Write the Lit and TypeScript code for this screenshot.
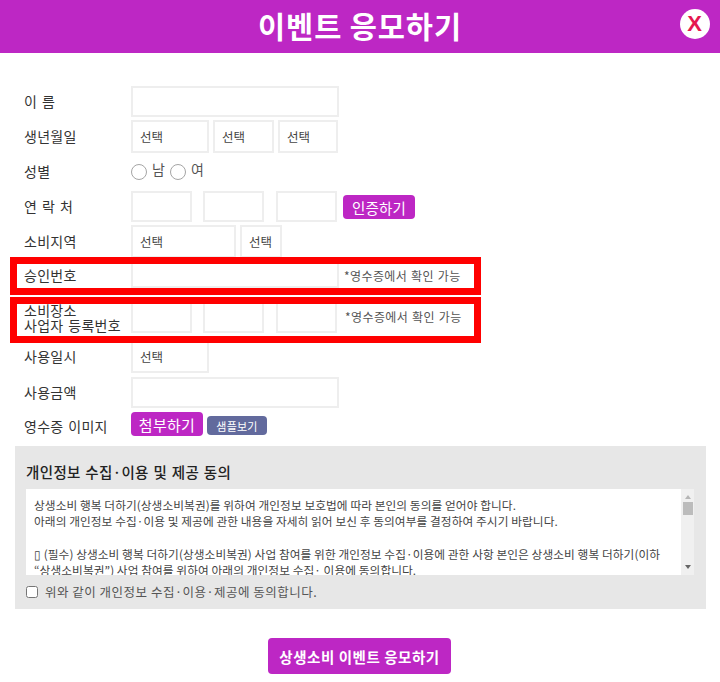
import { LitElement, html, css } from "lit";
import { customElement } from "lit/decorators.js";

@customElement("app-root")
export class AppRoot extends LitElement {
  static styles = css`
    :host { display: block; width: 720px; height: 682px; overflow: hidden; background: #fff; position: relative;
      font-family: "Noto Sans CJK KR", "Liberation Sans", sans-serif; color: #333; }
    * { box-sizing: border-box; }
    .head { height: 53px; background: #bd27c4; display: flex; align-items: center; justify-content: center; position: relative;
      color: #fff; font-size: 29.5px; font-weight: 700; letter-spacing: 0.9px; padding-bottom: 4px; }
    .close { position: absolute; left: 680px; top: 9px; width: 30px; height: 30px; border-radius: 50%; background: #fff; color: #e5174f;
      display: flex; align-items: center; justify-content: center; font: bold 22px "Liberation Sans", sans-serif; }
    form { padding: 33px 0 0 24px; margin: 0; position: relative; }
    .row { display: flex; align-items: center; font-size: 14px; }
    .lab { width: 107px; flex: none; line-height: 15px; letter-spacing: 0.25px; word-spacing: 1.5px; white-space: nowrap; }
    .ctl { display: flex; align-items: flex-start; }
    .box { border: 2px solid #eeeeee; height: 31px; background: #fff; display: block; padding: 0 7px; flex: none; color: #444;
      font: 12.5px/27px "Noto Sans CJK KR", sans-serif; outline: none; appearance: none; border-radius: 0; margin: 0; }
    .tall { height: 33px; }
    .r1 { height: 31px; }
    .r2 { height: 33px; margin-top: 3px; }
    .r3 { height: 38px; }
    .r3 .lab { margin-top: -2px; }
    .r4 { height: 31px; }
    .r5 { height: 33px; margin-top: 3px; align-items: flex-start; }
    .r5 .lab { padding-top: 9px; }
    .r6 { height: 31px; margin-top: -1px; }
    .r6 .lab { padding-top: 6px; }
    .r6 .note { padding-top: 5px; }
    .r7 { height: 31px; margin-top: 14px; }
    .r7 .note { margin-left: 8px; margin-top: -2px; }
    .r8 { height: 33px; margin-top: 7px; align-items: flex-end; }
    .r8 .lab { padding-bottom: 9px; }
    .r9 { height: 31px; margin-top: 4px; }
    .r10 { height: 24px; margin-top: 4px; }
    .r10 .lab { padding-top: 4px; }
    .w208 { width: 208px; } .w78 { width: 78px; } .w61 { width: 61px; } .w60 { width: 60px; } .w105 { width: 105px; } .w42 { width: 42px; }
    .note { font-size: 12px; color: #555; margin-left: 5px; letter-spacing: 0.4px; word-spacing: 0.8px; align-self: center; }
    .radio { appearance: none; width: 16px; height: 16px; border: 1px solid #a5a5a5; border-radius: 50%; margin: 0; background: #fff; flex: none; }
    .gender { display: flex; align-items: flex-start; font-size: 14px; color: #555; gap: 5px; }
    .gender span { margin-top: -4px; line-height: 18px; }
    .gap { display: flex; gap: 4px; }
    .g12 { display: flex; gap: 11px; }
    .g12 input:last-child { margin-left: 1px; }
    .btn { background: #bd27c4; color: #fff; border: none; border-radius: 4px; display: flex; align-items: center; justify-content: center; flex: none; margin: 0; padding: 0;
      font-family: inherit; }
    .auth { width: 72px; height: 24px; font-size: 14.5px; margin: 1px 0 0 6px; letter-spacing: 0.2px; }
    .attach { width: 72px; height: 24px; font-size: 15px; letter-spacing: 0.3px; }
    .sample { width: 60px; height: 19px; margin: 4px 0 0 4px; background: #626a9d; font-size: 11px; letter-spacing: 0.2px; }
    .mark { position: absolute; left: 10px; width: 471px; border: 7px solid #ff0000; pointer-events: none; }
    .m1 { top: 204px; height: 38px; }
    .m2 { top: 244px; height: 46px; }
    .agree { margin: 10px 14px 0 15px; height: 163px; background: #e7e7e7; padding: 17px 12px 0 11px; }
    .agree h3 { margin: 0; font-size: 14.5px; font-weight: 500; line-height: 20px; color: #222; letter-spacing: 0.35px; word-spacing: 1px; transform: translateY(-1px); }
    .scroll { margin-top: 6px; height: 86px; background: #fff; display: flex; overflow: hidden; }
    .txt { flex: 1; padding: 8px 0 0 8px; font-size: 11.7px; line-height: 16.2px; color: #444; overflow: hidden; letter-spacing: 0.07px; }
    .txt p { margin: 0; white-space: nowrap; }
    .bar { width: 13px; background: #f0f0f0; display: flex; flex-direction: column; align-items: center; position: relative; flex: none; }
    .up { margin-top: 6px; width: 0; height: 0; border: 3.5px solid transparent; border-top: 0; border-bottom: 4px solid #b5b5b5; }
    .thumb { margin-top: 3px; width: 10px; height: 13px; background: #bcbcbc; }
    .down { margin-top: auto; margin-bottom: 6px; width: 0; height: 0; border: 3.5px solid transparent; border-bottom: 0; border-top: 4px solid #666; }
    .ok { display: flex; align-items: center; gap: 7px; margin-top: 8px; font-size: 12.5px; color: #555; letter-spacing: 0.5px; line-height: 18px; }
    .ok input { margin: 0; width: 12px; height: 12px; flex: none; }
    .foot { display: flex; justify-content: center; margin-top: 29px; padding-right: 1px; }
    .submit { width: 183px; height: 36px; font-size: 14.5px; font-weight: 700; letter-spacing: 0.55px; border-radius: 4px; }
  `;

  render() {
    return html`
      <div class="head">이벤트 응모하기<div class="close">X</div></div>
      <form>
        <div class="row r1"><div class="lab">이 름</div><input class="box w208" /></div>
        <div class="row r2"><div class="lab">생년월일</div>
          <div class="ctl gap">
            <select class="box tall w78"><option>선택</option></select>
            <select class="box tall w61"><option>선택</option></select>
            <select class="box tall w60"><option>선택</option></select>
          </div></div>
        <div class="row r3"><div class="lab">성별</div>
          <div class="gender"><input type="radio" class="radio" name="g" /><span>남</span><input type="radio" class="radio" name="g" /><span>여</span></div></div>
        <div class="row r4"><div class="lab">연 락 처</div>
          <div class="ctl g12"><input class="box w61" /><input class="box w61" /><input class="box w61" /></div>
          <button type="button" class="btn auth">인증하기</button></div>
        <div class="row r5"><div class="lab">소비지역</div>
          <div class="ctl gap">
            <select class="box tall w105"><option>선택</option></select>
            <select class="box tall w42"><option>선택</option></select>
          </div></div>
        <div class="row r6"><div class="lab">승인번호</div><input class="box w208" /><span class="note">*영수증에서 확인 가능</span></div>
        <div class="row r7"><div class="lab">소비장소<br />사업자 등록번호</div>
          <div class="ctl g12"><input class="box w61" /><input class="box w61" /><input class="box w61" /></div>
          <span class="note">*영수증에서 확인 가능</span></div>
        <div class="row r8"><div class="lab">사용일시</div><select class="box tall w78"><option>선택</option></select></div>
        <div class="row r9"><div class="lab">사용금액</div><input class="box w208" /></div>
        <div class="row r10"><div class="lab">영수증 이미지</div>
          <div class="ctl"><button type="button" class="btn attach">첨부하기</button><button type="button" class="btn sample">샘플보기</button></div></div>
        <div class="mark m1"></div>
        <div class="mark m2"></div>
      </form>
      <div class="agree">
        <h3>개인정보 수집·이용 및 제공 동의</h3>
        <div class="scroll">
          <div class="txt">
            <p>상생소비 행복 더하기(상생소비복권)를 위하여 개인정보 보호법에 따라 본인의 동의를 얻어야 합니다.</p>
            <p>아래의 개인정보 수집·이용 및 제공에 관한 내용을 자세히 읽어 보신 후 동의여부를 결정하여 주시기 바랍니다.</p>
            <p>&nbsp;</p>
            <p>▯ (필수) 상생소비 행복 더하기(상생소비복권) 사업 참여를 위한 개인정보 수집·이용에 관한 사항 본인은 상생소비 행복 더하기(이하</p>
            <p>“상생소비복권”) 사업 참여를 위하여 아래의 개인정보 수집· 이용에 동의합니다.</p>
          </div>
          <div class="bar"><div class="up"></div><div class="thumb"></div><div class="down"></div></div>
        </div>
        <label class="ok"><input type="checkbox" />위와 같이 개인정보 수집·이용·제공에 동의합니다.</label>
      </div>
      <div class="foot"><button type="button" class="btn submit">상생소비 이벤트 응모하기</button></div>
    `;
  }
}
